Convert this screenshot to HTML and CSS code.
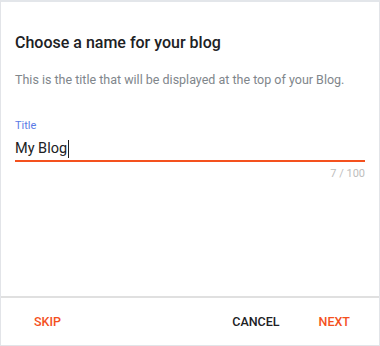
FILE: index.html
```html
<!DOCTYPE html>
<html>
<head>
<meta charset="utf-8">
<link rel="stylesheet" href="styles.css">
</head>
<body>
<div class="dialog">
  <div class="content">
    <h1 class="heading">Choose a name for your blog</h1>
    <p class="desc">This is the title that will be displayed at the top of your Blog.</p>
    <div class="field">
      <label class="label">Title</label>
      <div class="input">My Blog<span class="caret"></span></div>
      <div class="counter">7 / 100</div>
    </div>
  </div>
  <div class="footer">
    <button class="btn accent">SKIP</button>
    <div class="spacer"></div>
    <button class="btn dark">CANCEL</button>
    <button class="btn accent">NEXT</button>
  </div>
</div>
</body>
</html>
```
FILE: styles.css
```css
html, body { margin: 0; padding: 0; background: #fff; }
body { font-family: Roboto, "Noto Sans", sans-serif; }
.dialog {
  box-sizing: border-box;
  width: 380px;
  height: 346px;
  border: 1px solid #e2e4e8;
  border-top: 2px solid #e3e6ea;
  display: flex;
  flex-direction: column;
}
.content {
  flex: 1;
  padding: 29px 14px 0 14px;
}
.heading {
  margin: 0;
  font-size: 16px;
  font-weight: 500;
  line-height: 24px;
  color: #202124;
}
.desc {
  margin: 15px 0 0 0;
  font-size: 12.5px;
  line-height: 20px;
  color: #80868b;
}
.field { margin-top: 29px; }
.label {
  display: block;
  font-size: 11px;
  line-height: 14px;
  color: #5a7be6;
}
.input {
  margin-top: 6px;
  font-size: 14.5px;
  line-height: 20px;
  color: #202124;
  padding-bottom: 1px;
  border-bottom: 2px solid #f4511e;
  display: flex;
  align-items: center;
}
.caret {
  display: inline-block;
  width: 1px;
  height: 18px;
  background: #202124;
  margin-left: 1px;
}
.counter {
  margin-top: 5px;
  text-align: right;
  font-size: 11px;
  line-height: 14px;
  color: #bdbdbd;
}
.footer {
  height: 47px;
  border-top: 2px solid #e0e0e0;
  display: flex;
  align-items: center;
  padding: 0 14px 0 18px;
}
.spacer { flex: 1; }
.btn {
  background: none;
  border: 0;
  font-family: Roboto, "Noto Sans", sans-serif;
  font-size: 12.5px;
  font-weight: 500;
  padding: 0 15px;
  height: 36px;
  letter-spacing: 0;
}
.accent { color: #f4511e; }
.dark { color: #202124; margin-right: 9px; }
```
